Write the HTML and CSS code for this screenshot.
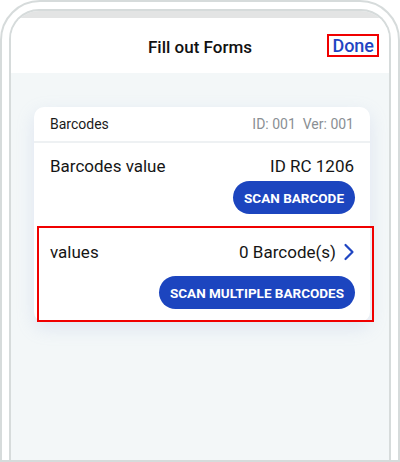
FILE: index.html
```html
<!DOCTYPE html>
<html>
<head>
<meta charset="utf-8">
<link rel="stylesheet" href="styles.css">
</head>
<body>
<div class="phone">
  <div class="screen">
    <div class="status"></div>
    <div class="header">
      <div class="title">Fill out Forms</div>
      <div class="done">Done<span class="mark"></span></div>
    </div>
    <div class="content">
      <div class="card">
        <div class="card-head">
          <span class="card-name">Barcodes</span>
          <span class="card-meta">ID: 001&nbsp;&nbsp;Ver: 001</span>
        </div>
        <div class="row row-single">
          <div class="line">
            <span class="label">Barcodes value</span>
            <span class="value">ID RC 1206</span>
          </div>
          <div class="actions"><button class="btn">SCAN BARCODE</button></div>
        </div>
        <div class="row row-multi">
          <div class="line">
            <span class="label">values</span>
            <span class="value value-link">0 Barcode(s)
              <svg class="chev" width="12" height="18" viewBox="0 0 12 18"><path d="M2.5 2 L9.5 9 L2.5 16" fill="none" stroke="#1f45c2" stroke-width="2.2" stroke-linecap="round" stroke-linejoin="round"/></svg>
            </span>
          </div>
          <div class="actions"><button class="btn">SCAN MULTIPLE BARCODES</button></div>
          <span class="mark mark-row"></span>
        </div>
      </div>
    </div>
  </div>
</div>
</body>
</html>
```

FILE: styles.css
```css
* { box-sizing: border-box; }
html, body {
  margin: 0;
  padding: 0;
  width: 400px;
  height: 462px;
  overflow: hidden;
  background: #ffffff;
  font-family: Roboto, "Liberation Sans", sans-serif;
}
.phone {
  width: 400px;
  height: 462px;
  border: 2px solid #d6dbdb;
  border-radius: 40px 40px 0 0;
  padding: 7px 7px 0 7px;
  background: #ffffff;
}
.screen {
  height: 100%;
  border: 2px solid #d6dbdb;
  border-bottom: none;
  border-radius: 30px 30px 0 0;
  overflow: hidden;
  display: flex;
  flex-direction: column;
  background: #f3f7f8;
}
.status {
  height: 7px;
  background: #e3e4e4;
  flex: none;
}
.header {
  height: 55px;
  flex: none;
  background: #ffffff;
  position: relative;
  display: flex;
  align-items: center;
  justify-content: center;
}
.title {
  font-size: 17px;
  font-weight: 500;
  color: #111111;
  margin-top: 2px;
}
.done {
  position: absolute;
  right: 10px;
  top: 16px;
  font-size: 18px;
  font-weight: 500;
  color: #1f45c2;
  padding: 0 5px;
  line-height: 23px;
}
.mark {
  position: absolute;
  inset: 0;
  border: 2px solid #f00000;
  pointer-events: none;
}
.content {
  flex: 1;
  padding: 34px 19px 0 23px;
}
.card {
  background: #ffffff;
  border-radius: 10px;
  box-shadow: 0 6px 18px rgba(150, 170, 220, 0.22);
}
.card-head {
  height: 36px;
  padding: 0 16px;
  display: flex;
  align-items: center;
  justify-content: space-between;
  border-bottom: 2px solid #eef1f3;
  font-size: 14px;
}
.card-name { color: #1a1a1a; }
.card-meta { color: #8a8f94; }
.row {
  padding: 0 16px;
  position: relative;
}
.line {
  display: flex;
  align-items: center;
  justify-content: space-between;
  height: 24px;
  font-size: 17px;
  color: #151515;
}
.value-link {
  display: flex;
  align-items: center;
  gap: 7px;
}
.chev { display: block; margin-right: -1px; }
.actions {
  display: flex;
  justify-content: flex-end;
}
.row-single { padding-top: 11px; padding-bottom: 12px; }
.row-single .actions { margin-top: 3px; }
.row-multi { padding-top: 14px; padding-bottom: 13px; }
.row-multi .actions { margin-top: 12px; }
.btn {
  border: none;
  background: #1c45bf;
  color: #ffffff;
  font-family: Roboto, "Liberation Sans", sans-serif;
  font-weight: 700;
  font-size: 13.5px;
  white-space: nowrap;
  height: 33px;
  border-radius: 17px;
  padding: 0 11px;
  margin-right: -1px;
}
.mark-row {
  left: 3px;
  right: -4px;
  top: 0;
  bottom: 0;
}
```
